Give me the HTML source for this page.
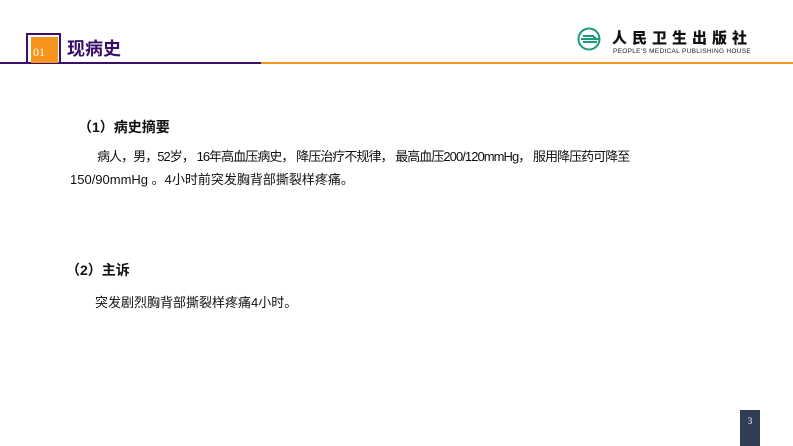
<!DOCTYPE html>
<html><head><meta charset="utf-8"><style>
body{margin:0;width:793px;height:446px;background:#fff;position:relative;overflow:hidden;font-family:"Liberation Sans","Noto Sans CJK SC",sans-serif;}
.a{position:absolute}
</style></head><body>
<div class="a" style="left:0;top:62px;width:261px;height:2px;background:#3d0f6b"></div>
<div class="a" style="left:261px;top:62px;width:532px;height:2px;background:#f7941d"></div>
<div class="a" style="left:26px;top:33px;width:31px;height:29px;border:2px solid #3d0f6b;border-bottom:none"></div>
<div class="a" style="left:31px;top:37px;width:27px;height:26px;background:#f7941d;color:#fff;font-family:'Liberation Serif',serif;font-size:12px;line-height:30px;padding-left:2px;box-sizing:border-box">01</div>
<div class="a" style="left:67px;top:35px;font-size:18px;font-weight:bold;color:#3a0f68">现病史</div>
<svg class="a" style="left:577px;top:27px" width="26" height="26" viewBox="0 0 26 26"><circle cx="12" cy="12" r="10.5" fill="none" stroke="#1a9a7a" stroke-width="2"/><path d="M4 12h18M6 9h10l3 3M6 15h14" stroke="#1a9a7a" stroke-width="2" fill="none"/></svg>
<div class="a" style="left:612px;top:27px;font-size:15px;font-weight:900;letter-spacing:5px;color:#111;font-family:'Noto Sans CJK SC',sans-serif">人民卫生出版社</div>
<div class="a" style="left:613px;top:48px;font-size:6.5px;color:#222;letter-spacing:0.3px">PEOPLE'S MEDICAL PUBLISHING HOUSE</div>
<div class="a" style="left:78px;top:117px;font-size:14px;font-weight:bold;color:#111">（1）病史摘要</div>
<div class="a" style="left:97px;top:145px;white-space:nowrap;font-size:13px;line-height:23px;color:#111;letter-spacing:-0.95px">病人，男，52岁， 16年高血压病史， 降压治疗不规律， 最高血压200/120mmHg， 服用降压药可降至</div>
<div class="a" style="left:70px;top:168px;white-space:nowrap;font-size:13px;line-height:23px;color:#111">150/90mmHg 。4小时前突发胸背部撕裂样疼痛。</div>
<div class="a" style="left:66px;top:260px;font-size:14px;font-weight:bold;color:#111">（2）主诉</div>
<div class="a" style="left:95px;top:292px;font-size:13px;color:#111">突发剧烈胸背部撕裂样疼痛4小时。</div>
<div class="a" style="left:740px;top:410px;width:20px;height:36px;background:#2f3d55;color:#fff;font-size:9px;text-align:center;line-height:22px;font-family:'Liberation Serif',serif">3</div>
</body></html>
